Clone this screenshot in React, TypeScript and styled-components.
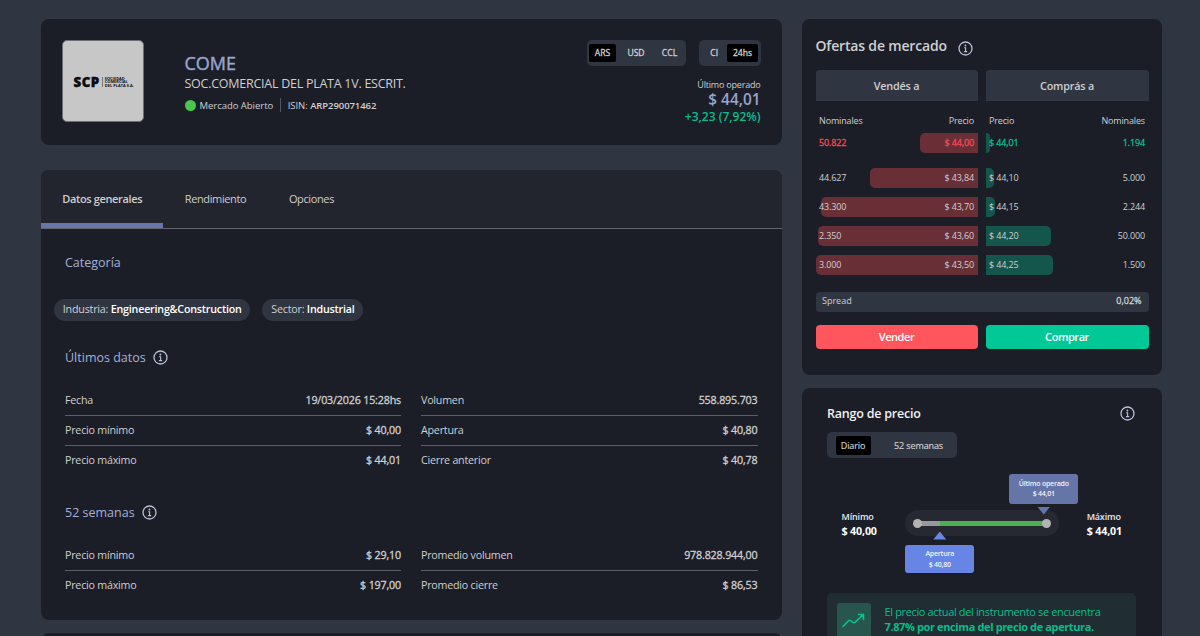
import React from "react";
import styled, { createGlobalStyle, css } from "styled-components";

const Global = createGlobalStyle`
  * { box-sizing: border-box; }
  html, body { margin: 0; height: 636px; overflow: hidden; }
  body { background: #303641; font-family: "Open Sans", sans-serif; color: #cfcfd0; }
`;

/* Between regular and semibold. */
const medium = css`
  font-weight: 400;
  -webkit-text-stroke: 0.3px currentColor;
`;

const Page = styled.main`
  display: flex;
  align-items: flex-start;
  gap: 20px;
  height: 636px;
  overflow: hidden;
  padding: 19px 38px 0 41px;
`;
const MainColumn = styled.div`
  width: 740.5px;
  display: flex;
  flex-direction: column;
`;
const SideColumn = styled.div`
  width: 360.5px;
  display: flex;
  flex-direction: column;
  gap: 13px;
`;
const Card = styled.section`
  background: #1c1e27;
  border-radius: 8px;
  flex: none;
`;

/* ---------- instrument header ---------- */
const HeaderCard = styled(Card)`
  height: 125.5px;
  display: flex;
  padding: 21px;
`;
const LogoBox = styled.div`
  width: 82px;
  height: 82px;
  border: 1px solid #6d6f75;
  border-radius: 5px;
  background: #c7c7c8;
  color: #0c0c0e;
  display: flex;
  align-items: center;
  padding: 2px 0 0 10.5px;
`;
const LogoName = styled.span`
  font: 800 13.3px/10px "Open Sans", sans-serif;
  -webkit-text-stroke: 0.4px #0c0c0e;
  letter-spacing: 0.5px;
  padding-right: 2px;
  border-right: 1px solid #77777a;
`;
const LogoLegend = styled.span`
  font: 700 3.9px/3.6px "Open Sans", sans-serif;
  padding-left: 2px;
  letter-spacing: 0.05px;
  white-space: nowrap;
`;
const Identity = styled.div`
  margin-left: 40.5px;
  padding-top: 12px;
  flex: 1;
`;
const Ticker = styled.h1`
  margin: 0;
  font-size: 18px;
  ${medium}
  -webkit-text-stroke-width: 0.45px;
  line-height: 22px;
  color: #98a4cc;
`;
const Company = styled.div`
  font-size: 12.5px;
  line-height: 19px;
  letter-spacing: -0.26px;
`;
const Meta = styled.div`
  display: flex;
  align-items: center;
  margin-top: 5px;
  height: 14px;
  font-size: 9.5px;
  letter-spacing: -0.03px;
  b { font-weight: 600; letter-spacing: -0.08px; }
`;
const Dot = styled.i`
  width: 11px;
  height: 11px;
  border-radius: 50%;
  background: #4bc74f;
  margin-right: 4px;
`;
const MetaDivider = styled.i`
  width: 1px;
  height: 14px;
  background: #50545e;
  margin: 0 7px 0 6.5px;
`;
const Quote = styled.div`
  display: flex;
  flex-direction: column;
  align-items: flex-end;
`;
const Toggles = styled.div`
  display: flex;
  gap: 13.5px;
`;
const Toggle = styled.div`
  display: flex;
  align-items: center;
  height: 25.5px;
  padding: 0 2.5px;
  border-radius: 5px;
  background: #303641;
`;
const ToggleItem = styled.button<{ $on?: boolean; $w: number }>`
  border: 0;
  padding: 0;
  width: ${(p) => p.$w}px;
  height: 18.5px;
  border-radius: 2px;
  background: ${(p) => (p.$on ? "#000" : "transparent")};
  color: #d0d0d1;
  font: 400 8.6px/19px "Open Sans", sans-serif;
  ${medium}
  white-space: nowrap;
`;
const QuoteLabel = styled.div`
  margin-top: 12px;
  font-size: 9px;
  line-height: 14px;
  letter-spacing: -0.2px;
`;
const QuotePrice = styled.div`
  font-size: 15.4px;
  font-weight: 600;
  line-height: 16px;
  color: #98a4cc;
`;
const QuoteChange = styled.div`
  font-size: 12px;
  font-weight: 600;
  line-height: 17px;
  color: #07bd8b;
`;

/* ---------- data card ---------- */
const DataCard = styled(Card)`
  margin-top: 25.5px;
  height: 450px;
  overflow: hidden;
`;
const NextCard = styled(Card)`
  margin-top: 13px;
  height: 60px;
`;
const Tabs = styled.nav`
  display: flex;
  height: 59px;
  background: #22252e;
  border-bottom: 1px solid #62656c;
`;
const Tab = styled.div<{ $active?: boolean }>`
  height: 58px;
  padding: 0 21.3px;
  font-size: 11px;
  line-height: 57px;
  letter-spacing: -0.37px;
  ${(p) =>
    p.$active &&
    css`
      font-weight: 600;
      border-bottom: 5px solid #6675aa;
    `}
`;
const DataBody = styled.div`
  padding: 23px 24px 0;
`;
const SectionTitle = styled.h2`
  margin: 0;
  display: flex;
  align-items: center;
  gap: 7px;
  height: 20px;
  font-size: 12.5px;
  font-weight: 400;
  color: #a3b0d8;
`;
const Chips = styled.div`
  display: flex;
  gap: 12px;
  margin: 26.5px 0 26.5px -11px;
`;
const Chip = styled.span`
  height: 22px;
  padding: 0 8.8px;
  border-radius: 11px;
  background: #303641;
  font-size: 10.7px;
  line-height: 21px;
  letter-spacing: -0.2px;
  b { color: #fff; font-weight: 600; }
`;
const Grid = styled.div<{ $bottom: number }>`
  display: grid;
  grid-template-columns: 336px 336.5px;
  column-gap: 20px;
  margin: 19px 0 ${(p) => p.$bottom}px;
`;
const DataRow = styled.div<{ $last?: boolean }>`
  display: flex;
  justify-content: space-between;
  height: 30px;
  font-size: 10.7px;
  line-height: 29px;
  letter-spacing: -0.22px;
  border-bottom: 1px solid ${(p) => (p.$last ? "transparent" : "#5b5e66")};
  b { ${medium} letter-spacing: -0.16px; }
`;

/* ---------- order book ---------- */
const BookCard = styled(Card)`
  height: 356px;
  padding: 16px 13.5px 0 14px;
`;
const BookTitle = styled.h2`
  margin: 0;
  display: flex;
  align-items: center;
  gap: 11.5px;
  height: 22px;
  font-size: 14px;
  font-weight: 600;
  line-height: 22px;
  letter-spacing: -0.18px;
  padding-bottom: 1px;
  svg { margin-top: 5px; }
`;
const Sides = styled.div`
  display: grid;
  grid-template-columns: 162px 163px;
  column-gap: 8px;
`;
const SideHead = styled.div`
  margin-top: 13px;
  height: 31px;
  border-radius: 4px 4px 0 0;
  background: #303641;
  text-align: center;
  font-size: 10.8px;
  font-weight: 600;
  line-height: 32px;
  letter-spacing: -0.2px;
`;
const Labels = styled.div`
  display: flex;
  justify-content: space-between;
  padding: 0 3.5px;
  margin-top: 12px;
  height: 20px;
  font-size: 9px;
  line-height: 15px;
  letter-spacing: -0.15px;
`;
const BookRow = styled.div<{ $side: "sell" | "buy"; $fill: number; $best?: boolean }>`
  display: flex;
  justify-content: space-between;
  flex-direction: ${(p) => (p.$side === "sell" ? "row" : "row-reverse")};
  padding: 0 3.5px;
  height: 20px;
  margin-bottom: ${(p) => (p.$best ? 15.3 : 8.8)}px;
  font-size: 9px;
  letter-spacing: -0.12px;
  line-height: ${(p) => (p.$best ? 19.5 : 20.5)}px;
  color: #cfcfd0;
  ${(p) =>
    p.$best &&
    css`
      ${medium}
      color: ${p.$side === "sell" ? "#ee4c55" : "#07bd8b"};
    `}
  position: relative;
  isolation: isolate;
  &::before {
    content: "";
    position: absolute;
    z-index: -1;
    top: 0;
    bottom: 0;
    ${(p) => (p.$side === "sell" ? "right" : "left")}: 0;
    width: ${(p) => p.$fill}px;
    background: ${(p) => (p.$side === "sell" ? "#682f37" : "#14564c")};
    border-radius: ${(p) => (p.$side === "sell" ? "5px 0 0 5px" : "0 5px 5px 0")};
  }
`;
const Spread = styled.div`
  display: flex;
  justify-content: space-between;
  margin-top: 9px;
  height: 20px;
  padding: 0 7px 0 6.5px;
  border-radius: 4px;
  background: #303641;
  font-size: 9px;
  line-height: 18.5px;
  b { ${medium} }
`;
const TradeButton = styled.button<{ $side: "sell" | "buy" }>`
  margin-top: 13px;
  height: 24px;
  border: 0;
  padding: 0;
  border-radius: 4px;
  background: ${(p) => (p.$side === "sell" ? "#ff565d" : "#00c896")};
  color: #fff;
  font: 600 11px/24px "Open Sans", sans-serif;
  letter-spacing: -0.45px;
`;

/* ---------- price range ---------- */
const RangeCard = styled(Card)`
  height: 290px;
  padding: 15px 26px 0 25.5px;
`;
const RangeTitle = styled.h2`
  margin: 0 0 9px;
  display: flex;
  align-items: center;
  justify-content: space-between;
  height: 20px;
  padding-right: 1px;
  font-size: 12.5px;
  font-weight: 600;
  letter-spacing: -0.22px;
  color: #f1f1f2;
`;
const RangeToggle = styled(Toggle)`
  width: 130px;
  height: 26px;
  padding: 1px 8.5px 0;
  justify-content: space-between;
`;
const RangeItem = styled(ToggleItem)`
  font-size: 9px;
  letter-spacing: -0.1px;
  -webkit-text-stroke-width: 0.15px;
`;
const RangeRow = styled.div`
  display: flex;
  align-items: center;
  justify-content: space-between;
  height: 26px;
  margin-top: 52px;
  padding: 0 14px 0 14.5px;
`;
const Bound = styled.div`
  padding-top: 1px;
  font-size: 9px;
  font-weight: 600;
  line-height: 15px;
  letter-spacing: -0.15px;
  color: #e8e8e9;
  b { display: block; font-size: 10.7px; font-weight: 700; color: #fff; }
`;
const Slider = styled.div`
  position: relative;
  width: 154px;
  height: 26px;
  padding: 0 12px;
  border-radius: 13px;
  background: #262932;
  display: flex;
  align-items: center;
`;
const Track = styled.div`
  display: flex;
  align-items: center;
  justify-content: space-between;
  width: 130px;
  height: 5px;
  background: linear-gradient(90deg, #999 0 23px, #4caf50 23px);
`;
const Handle = styled.i`
  width: 9px;
  height: 9px;
  border-radius: 50%;
  background: #b3b3b3;
  margin: 0 -4px;
`;
const Tip = styled.div<{ $x: number; $y: number; $h: number; $color: string }>`
  position: absolute;
  left: ${(p) => p.$x}px;
  top: ${(p) => p.$y}px;
  width: 69px;
  height: ${(p) => p.$h}px;
  padding-top: 4.5px;
  border-radius: 3px;
  background: ${(p) => p.$color};
  color: #f2f3f8;
  text-align: center;
  font-size: 7px;
  font-weight: 600;
  line-height: 10.5px;
  letter-spacing: -0.22px;
`;
const Arrow = styled.i<{ $x: number; $y: number; $up?: boolean; $color: string }>`
  position: absolute;
  left: ${(p) => p.$x}px;
  top: ${(p) => p.$y}px;
  width: 13px;
  height: 8px;
  background: ${(p) => p.$color};
  clip-path: ${(p) => (p.$up ? "polygon(50% 0, 100% 100%, 0 100%)" : "polygon(0 0, 100% 0, 50% 100%)")};
`;
const Notice = styled.div`
  display: flex;
  gap: 14px;
  margin-top: 57px;
  height: 60px;
  padding: 10px 9.5px;
  width: 309px;
  border-radius: 5px;
  background: #202e34;
  color: #07bd8b;
  font-size: 11px;
  line-height: 15.6px;
  letter-spacing: -0.36px;
  white-space: nowrap;
  b { display: block; font-weight: 700; letter-spacing: -0.38px; }
`;
const NoticeIcon = styled.div`
  width: 34px;
  height: 34px;
  border-radius: 3px;
  background: #28564f;
  display: flex;
  align-items: center;
  justify-content: center;
`;
const NoticeText = styled.div`
  padding-top: 0.5px;
`;

const Info = () => (
  <svg width="15" height="15" viewBox="0 0 15 15" fill="none" stroke="#b9bfd6">
    <circle cx="7.5" cy="7.5" r="6.5" strokeWidth="1.3" />
    <path d="M6.1 6.7h1.5v3.9M5.9 10.6h3.3" strokeWidth="1.1" />
    <circle cx="7.4" cy="4.5" r="0.9" fill="#b9bfd6" stroke="none" />
  </svg>
);

type Pair = [string, string];
const lastData: Pair[] = [
  ["Fecha", "19/03/2026 15:28hs"],
  ["Volumen", "558.895.703"],
  ["Precio mínimo", "$ 40,00"],
  ["Apertura", "$ 40,80"],
  ["Precio máximo", "$ 44,01"],
  ["Cierre anterior", "$ 40,78"],
];
const yearData: Pair[] = [
  ["Precio mínimo", "$ 29,10"],
  ["Promedio volumen", "978.828.944,00"],
  ["Precio máximo", "$ 197,00"],
  ["Promedio cierre", "$ 86,53"],
];
const bids: [string, string, number][] = [
  ["50.822", "$ 44,00", 57.5],
  ["44.627", "$ 43,84", 108],
  ["43.300", "$ 43,70", 156.5],
  ["2.350", "$ 43,60", 159.5],
  ["3.000", "$ 43,50", 162],
];
const asks: [string, string, number][] = [
  ["1.194", "$ 44,01", 4],
  ["5.000", "$ 44,10", 8],
  ["2.244", "$ 44,15", 9.5],
  ["50.000", "$ 44,20", 65.5],
  ["1.500", "$ 44,25", 67.5],
];

const DataGrid = ({ rows, bottom }: { rows: Pair[]; bottom: number }) => (
  <Grid $bottom={bottom}>
    {rows.map(([label, value], i) => (
      <DataRow key={label} $last={i >= rows.length - 2}>
        <span>{label}</span>
        <b>{value}</b>
      </DataRow>
    ))}
  </Grid>
);

export default function App() {
  return (
    <>
      <Global />
      <Page>
        <MainColumn>
          <HeaderCard>
            <LogoBox>
              <LogoName>SCP</LogoName>
              <LogoLegend>
                SOCIEDAD
                <br />
                COMERCIAL
                <br />
                DEL PLATA S.A.
              </LogoLegend>
            </LogoBox>
            <Identity>
              <Ticker>COME</Ticker>
              <Company>SOC.COMERCIAL DEL PLATA 1V. ESCRIT.</Company>
              <Meta>
                <Dot />
                <span>Mercado Abierto</span>
                <MetaDivider />
                <span>
                  ISIN: <b>ARP290071462</b>
                </span>
              </Meta>
            </Identity>
            <Quote>
              <Toggles>
                <Toggle>
                  <ToggleItem $on $w={27}>ARS</ToggleItem>
                  <ToggleItem $w={40}>USD</ToggleItem>
                  <ToggleItem $w={27}>CCL</ToggleItem>
                </Toggle>
                <Toggle>
                  <ToggleItem $w={25.5}>CI</ToggleItem>
                  <ToggleItem $on $w={31}>24hs</ToggleItem>
                </Toggle>
              </Toggles>
              <QuoteLabel>Último operado</QuoteLabel>
              <QuotePrice>$ 44,01</QuotePrice>
              <QuoteChange>+3,23 (7,92%)</QuoteChange>
            </Quote>
          </HeaderCard>
          <DataCard>
            <Tabs>
              <Tab $active>Datos generales</Tab>
              <Tab>Rendimiento</Tab>
              <Tab>Opciones</Tab>
            </Tabs>
            <DataBody>
              <SectionTitle>Categoría</SectionTitle>
              <Chips>
                <Chip>
                  Industria: <b>Engineering&amp;Construction</b>
                </Chip>
                <Chip>
                  Sector: <b>Industrial</b>
                </Chip>
              </Chips>
              <SectionTitle>
                Últimos datos <Info />
              </SectionTitle>
              <DataGrid rows={lastData} bottom={26} />
              <SectionTitle>
                52 semanas <Info />
              </SectionTitle>
              <DataGrid rows={yearData} bottom={0} />
            </DataBody>
          </DataCard>
          <NextCard />
        </MainColumn>

        <SideColumn>
          <BookCard>
            <BookTitle>
              Ofertas de mercado <Info />
            </BookTitle>
            <Sides>
              <div>
                <SideHead>Vendés a</SideHead>
                <Labels>
                  <span>Nominales</span>
                  <span>Precio</span>
                </Labels>
                {bids.map(([qty, price, fill], i) => (
                  <BookRow key={price} $side="sell" $fill={fill} $best={i === 0}>
                    <span>{qty}</span>
                    <span>{price}</span>
                  </BookRow>
                ))}
              </div>
              <div>
                <SideHead>Comprás a</SideHead>
                <Labels>
                  <span>Precio</span>
                  <span>Nominales</span>
                </Labels>
                {asks.map(([qty, price, fill], i) => (
                  <BookRow key={price} $side="buy" $fill={fill} $best={i === 0}>
                    <span>{qty}</span>
                    <span>{price}</span>
                  </BookRow>
                ))}
              </div>
            </Sides>
            <Spread>
              <span>Spread</span>
              <b>0,02%</b>
            </Spread>
            <Sides>
              <TradeButton $side="sell">Vender</TradeButton>
              <TradeButton $side="buy">Comprar</TradeButton>
            </Sides>
          </BookCard>

          <RangeCard>
            <RangeTitle>
              Rango de precio <Info />
            </RangeTitle>
            <RangeToggle>
              <RangeItem $on $w={35}>Diario</RangeItem>
              <RangeItem $w={60}>52 semanas</RangeItem>
            </RangeToggle>
            <RangeRow>
              <Bound>
                Mínimo<b>$ 40,00</b>
              </Bound>
              <Slider>
                <Track>
                  <Handle />
                  <Handle />
                </Track>
                <Tip $x={104.5} $y={-36} $h={30} $color="#6675a8">
                  Último operado
                  <br />$ 44,01
                </Tip>
                <Arrow $x={132.5} $y={-3.5} $color="#6675a8" />
                <Arrow $x={28.5} $y={21.5} $up $color="#6785e4" />
                <Tip $x={0.5} $y={34.5} $h={28.5} $color="#6785e4">
                  Apertura
                  <br />$ 40,80
                </Tip>
              </Slider>
              <Bound>
                Máximo<b>$ 44,01</b>
              </Bound>
            </RangeRow>
            <Notice>
              <NoticeIcon>
                <svg width="23" height="15" viewBox="0 0 23 15" fill="none" stroke="#07c491" strokeWidth="1.6" strokeLinecap="round" strokeLinejoin="round">
                  <path d="M1 13.5L6.5 7.8Q7.5 6.8 8.5 7.6L11 9.4Q12.2 10.2 13.2 9.2L21.5 1.5M16.5 1.5h5v5" />
                </svg>
              </NoticeIcon>
              <NoticeText>
                El precio actual del instrumento se encuentra
                <b>7.87% por encima del precio de apertura.</b>
              </NoticeText>
            </Notice>
          </RangeCard>
        </SideColumn>
      </Page>
    </>
  );
}
